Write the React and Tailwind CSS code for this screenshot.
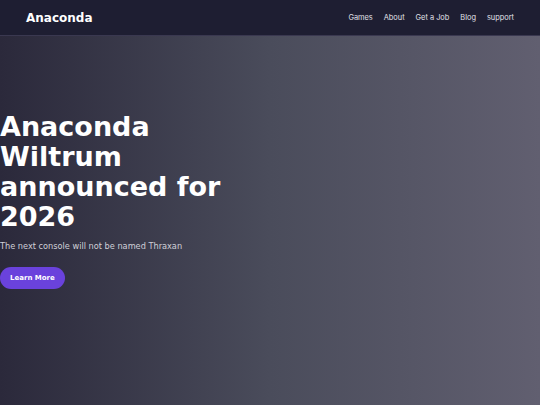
import React from 'react';

const links = ['Games', 'About', 'Get a Job', 'Blog', 'support'];

const App = () => {
    return (
        <div className="flex flex-col w-[540px] h-[405px] overflow-hidden font-['DejaVu_Sans',sans-serif]">
            {/* Header */}
            <header className="flex-none flex items-center justify-between h-9 px-[26px] bg-[#1e1e32] border-b border-[#3a3850]">
                <span className="text-[12px] font-bold text-white">Anaconda</span>
                <nav className="flex items-center gap-[11px] font-['Inter',sans-serif] text-[7.4px] text-[#e0e0e8]">
                    {links.map((l) => (
                        <a key={l} href="#">{l}</a>
                    ))}
                </nav>
            </header>

            {/* Hero */}
            <main className="flex-1 flex flex-col pt-[76px] bg-gradient-to-r from-[#2b293b] via-[#4a4c5b] to-[#615f70]">
                <h1 className="text-[27px] leading-[30px] font-bold text-white">
                    Anaconda<br />Wiltrum<br />announced for<br />2026
                </h1>
                <p className="mt-[8px] leading-[12px] text-[8.2px] text-[#d0d0d8]">The next console will not be named Thraxan</p>
                <div className="mt-[11px]">
                    <button className="px-[10px] h-[22px] rounded-full bg-[#6a42dc] text-white text-[7px] font-bold">
                        Learn More
                    </button>
                </div>
            </main>
        </div>
    );
};

export default App;
